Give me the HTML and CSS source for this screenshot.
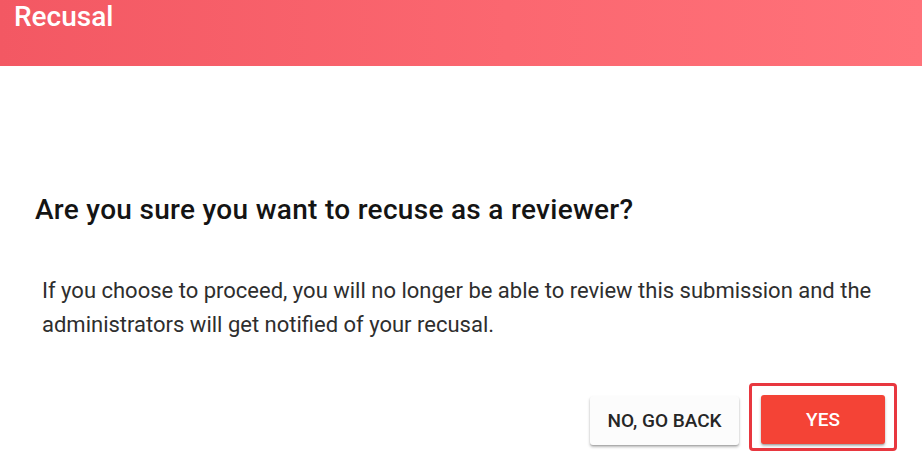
FILE: index.html
```html
<!DOCTYPE html>
<html lang="en">
<head>
<meta charset="utf-8">
<title>Recusal</title>
<link rel="stylesheet" href="styles.css">
</head>
<body>
<div class="dialog">
  <header class="dialog-header">
    <h1 class="dialog-title">Recusal</h1>
  </header>
  <main class="dialog-body">
    <h2 class="question">Are you sure you want to recuse as a reviewer?</h2>
    <p class="message">If you choose to proceed, you will no longer be able to review this submission and the administrators will get notified of your recusal.</p>
    <div class="actions">
      <button class="btn btn-secondary">NO, GO BACK</button>
      <div class="focus-ring">
        <button class="btn btn-primary">YES</button>
      </div>
    </div>
  </main>
</div>
</body>
</html>
```
FILE: styles.css
```css
* { box-sizing: border-box; }
html, body {
  margin: 0;
  padding: 0;
  background: #ffffff;
  font-family: Roboto, "Liberation Sans", Arial, sans-serif;
}
.dialog {
  width: 922px;
  height: 465px;
  overflow: hidden;
}
.dialog-header {
  height: 66px;
  padding-left: 14px;
  background: linear-gradient(90deg, #f35863 0%, #fb6770 55%, #ff727a 100%);
}
.dialog-title {
  margin: 0;
  font-size: 28px;
  line-height: 34px;
  font-weight: 500;
  color: #ffffff;
}
.dialog-body {
  padding: 126px 25px 0 35px;
}
.question {
  margin: 0;
  font-size: 28px;
  line-height: 36px;
  font-weight: 500;
  letter-spacing: 0.3px;
  color: #141414;
}
.message {
  margin: 46px 0 0 7px;
  font-size: 22px;
  line-height: 34px;
  font-weight: 400;
  color: #2e2e2e;
}
.actions {
  margin-top: 41px;
  display: flex;
  justify-content: flex-end;
  align-items: flex-start;
  gap: 10px;
}
.btn {
  height: 49px;
  border: none;
  border-radius: 3px;
  font-family: Roboto, "Liberation Sans", Arial, sans-serif;
  font-size: 19px;
  font-weight: 500;
  cursor: pointer;
  box-shadow: 0 2px 3px rgba(0, 0, 0, 0.28), 0 1px 1px rgba(0, 0, 0, 0.12);
}
.btn-secondary {
  margin-top: 13px;
  width: 149px;
  background: #fcfcfc;
  color: #262626;
}
.focus-ring {
  border: 3px solid #e8373f;
  border-radius: 4px;
  padding: 9px 9px 4px 9px;
}
.btn-primary {
  display: block;
  width: 124px;
  background: #f44336;
  color: #ffffff;
}
```
